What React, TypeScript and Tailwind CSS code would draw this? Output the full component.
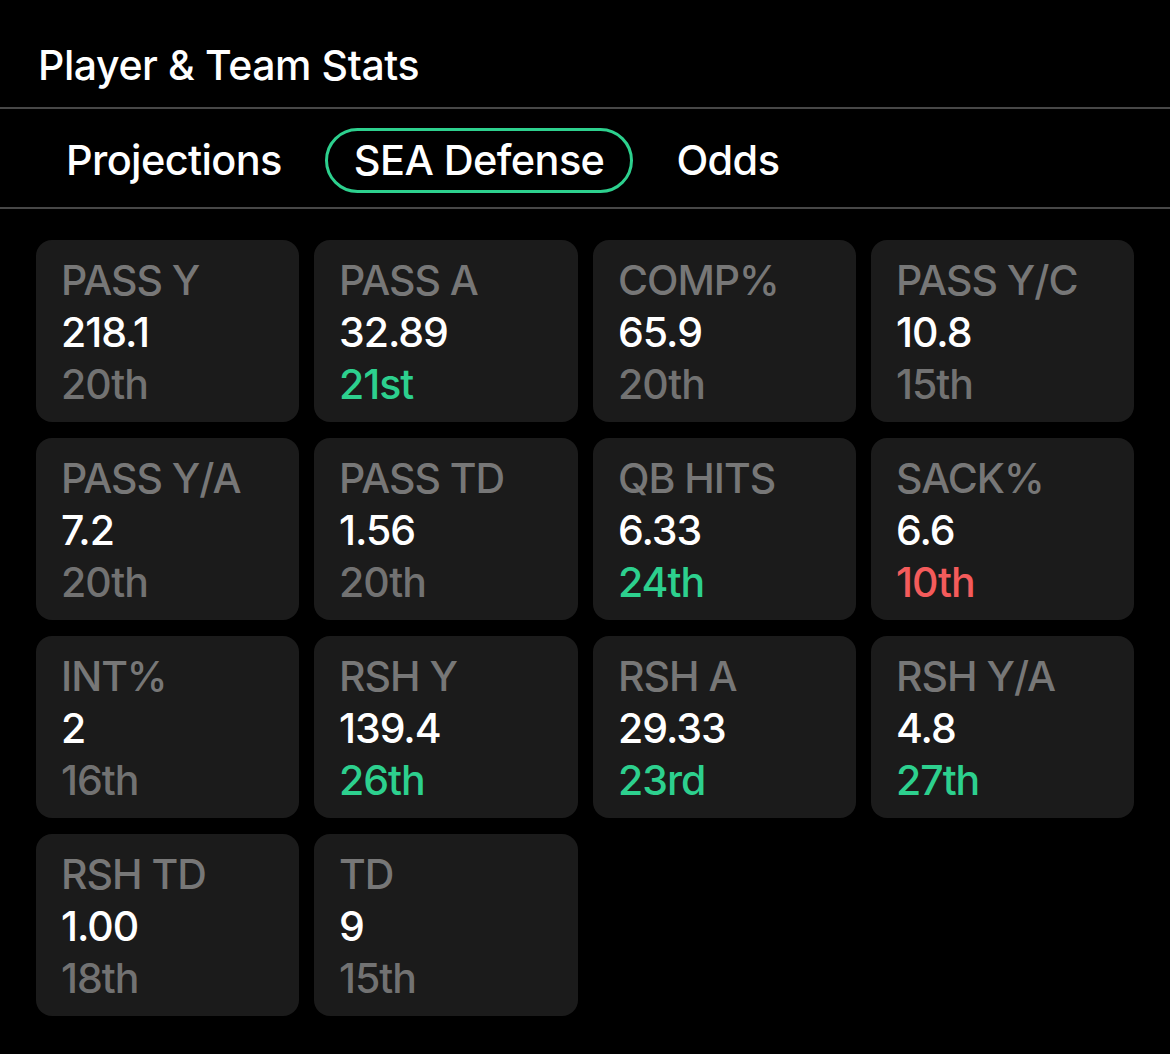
import React from "react";

type Stat = { label: string; value: string; rank: string; tone?: "green" | "red" };

const stats: Stat[] = [
  { label: "PASS Y", value: "218.1", rank: "20th" },
  { label: "PASS A", value: "32.89", rank: "21st", tone: "green" },
  { label: "COMP%", value: "65.9", rank: "20th" },
  { label: "PASS Y/C", value: "10.8", rank: "15th" },
  { label: "PASS Y/A", value: "7.2", rank: "20th" },
  { label: "PASS TD", value: "1.56", rank: "20th" },
  { label: "QB HITS", value: "6.33", rank: "24th", tone: "green" },
  { label: "SACK%", value: "6.6", rank: "10th", tone: "red" },
  { label: "INT%", value: "2", rank: "16th" },
  { label: "RSH Y", value: "139.4", rank: "26th", tone: "green" },
  { label: "RSH A", value: "29.33", rank: "23rd", tone: "green" },
  { label: "RSH Y/A", value: "4.8", rank: "27th", tone: "green" },
  { label: "RSH TD", value: "1.00", rank: "18th" },
  { label: "TD", value: "9", rank: "15th" },
];

function Card({ s }: { s: Stat }) {
  const rankColor =
    s.tone === "green" ? "text-[#2dd08e]" : s.tone === "red" ? "text-[#f45b5b]" : "text-[#727272]";
  return (
    <div className="flex h-[182px] flex-col rounded-[16px] bg-[#1b1b1b] pl-[25px] pt-[14px] text-[41px] font-medium leading-[52px] tracking-[-0.025em]">
      <div className="text-[#777777]">{s.label}</div>
      <div className="text-white">{s.value}</div>
      <div className={rankColor}>{s.rank}</div>
    </div>
  );
}

export default function App() {
  return (
    <div
      className="min-h-[1054px] w-[1170px] bg-black text-white"
      style={{ fontFamily: "Inter, 'Noto Sans', sans-serif" }}
    >
      <div className="flex h-[107px] items-center pl-[38px] pt-[24px] text-[41px] font-medium tracking-[-0.01em]">
        Player &amp; Team Stats
      </div>
      <div className="h-[2px] bg-[#474747]" />
      <div className="flex h-[98px] items-center gap-[14px] pl-[37px] pt-[4px] text-[41.5px] font-medium tracking-[-0.015em]">
        <div className="flex h-[65px] items-center rounded-full border-[3px] border-transparent px-[26px]">
          Projections
        </div>
        <div className="flex h-[65px] items-center rounded-full border-[3px] border-[#2dd08e] px-[26px]">
          SEA Defense
        </div>
        <div className="flex h-[65px] items-center rounded-full border-[3px] border-transparent px-[26px]">
          Odds
        </div>
      </div>
      <div className="h-[2px] bg-[#474747]" />
      <div className="grid grid-cols-[263px_264px_263px_263px] gap-x-[15px] gap-y-[16px] pl-[36px] pt-[31px]">
        {stats.map((s) => (
          <Card key={s.label} s={s} />
        ))}
      </div>
    </div>
  );
}
